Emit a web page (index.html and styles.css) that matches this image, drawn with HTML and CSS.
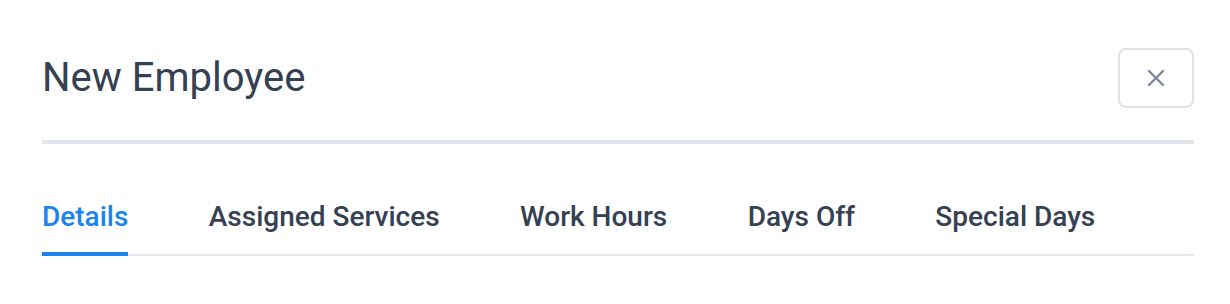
FILE: index.html
```html
<!DOCTYPE html>
<html lang="en">
<head>
<meta charset="utf-8">
<title>New Employee</title>
<link rel="stylesheet" href="styles.css">
</head>
<body>
<div class="dialog">
  <div class="header">
    <h1 class="title">New Employee</h1>
    <button class="close" type="button" aria-label="Close">
      <svg width="18" height="18" viewBox="0 0 18 18" aria-hidden="true">
        <path d="M2 2 L16 16 M16 2 L2 16" stroke="#7c8799" stroke-width="2.4" stroke-linecap="round" fill="none"/>
      </svg>
    </button>
  </div>
  <div class="tabs">
    <div class="tab active">Details</div>
    <div class="tab">Assigned Services</div>
    <div class="tab">Work Hours</div>
    <div class="tab">Days Off</div>
    <div class="tab">Special Days</div>
  </div>
</div>
</body>
</html>
```
FILE: styles.css
```css
html, body {
  margin: 0;
  padding: 0;
  background: #ffffff;
}
body {
  font-family: Roboto, "Liberation Sans", Arial, sans-serif;
  color: #354052;
}
.dialog {
  padding: 48px 36px 0 42px;
}
.header {
  display: flex;
  align-items: center;
  justify-content: space-between;
  padding-bottom: 32px;
  border-bottom: 4px solid #e2e5ea;
}
.title {
  margin: 0;
  font-size: 40px;
  line-height: 48px;
  font-weight: 400;
  color: #354052;
  letter-spacing: 0;
}
.close {
  box-sizing: border-box;
  width: 76px;
  height: 60px;
  border: 2px solid #dfe3e8;
  border-radius: 8px;
  background: #ffffff;
  display: flex;
  align-items: center;
  justify-content: center;
  padding: 0;
  cursor: pointer;
}
.tabs {
  display: flex;
  gap: 80.4px;
  margin-top: 56px;
  border-bottom: 2px solid #e2e6ec;
}
.tab {
  font-size: 28px;
  line-height: 33px;
  font-weight: 500;
  color: #354052;
  padding-bottom: 19px;
  border-bottom: 4px solid transparent;
  margin-bottom: -2px;
  white-space: nowrap;
}
.tab.active {
  color: #1a84ee;
  border-bottom-color: #1a84ee;
}
```
